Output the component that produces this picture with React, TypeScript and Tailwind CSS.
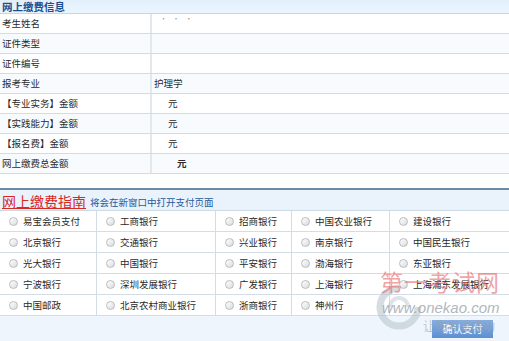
import React from 'react';

const FONT = { fontFamily: '"Noto Sans CJK SC", "Noto Sans", sans-serif' };

const info: { label: string; value: React.ReactNode }[] = [
  { label: '考生姓名', value: <span className="ml-[8px] -mt-[10px] text-[7px] tracking-[2px] text-[#999]">· · ·</span> },
  { label: '证件类型', value: null },
  { label: '证件编号', value: null },
  { label: '报考专业', value: <span className="ml-[2px]">护理学</span> },
  { label: '【专业实务】金额', value: <span className="ml-[16px]">元</span> },
  { label: '【实践能力】金额', value: <span className="ml-[16px]">元</span> },
  { label: '【报名费】金额', value: <span className="ml-[16px]">元</span> },
  { label: '网上缴费总金额', value: <span className="ml-[25px] font-bold">元</span> },
];

const banks = [
  ['易宝会员支付', '工商银行', '招商银行', '中国农业银行', '建设银行'],
  ['北京银行', '交通银行', '兴业银行', '南京银行', '中国民生银行'],
  ['光大银行', '中国银行', '平安银行', '渤海银行', '东亚银行'],
  ['宁波银行', '深圳发展银行', '广发银行', '上海银行', '上海浦东发展银行'],
  ['中国邮政', '北京农村商业银行', '浙商银行', '神州行', ''],
];

const Radio = () => (
  <span className="inline-block w-[9px] h-[9px] shrink-0 rounded-full border border-[#b9bcc0] bg-gradient-to-br from-white to-[#d9dcdf]" />
);

export default function App() {
  return (
    <div className="relative w-[509px] h-[341px] overflow-hidden bg-white text-[#2a2a2a]" style={FONT}>
      {/* 缴费信息 */}
      <div className="h-[14px] flex items-center pl-[2px] bg-gradient-to-b from-[#e2effb] to-[#ebf5fe] border-b border-[#c4d6e4]">
        <span className="text-[10.5px] leading-[13px] font-bold text-[#1d4f8e]">网上缴费信息</span>
      </div>
      {info.map((row, i) => (
        <div
          key={row.label}
          className={`flex h-[20px] border-b border-[#d3dce2] text-[9.5px] ${i % 2 === 0 ? 'bg-white' : 'bg-[#f8fbfd]'}`}
        >
          <div className="w-[152px] shrink-0 flex items-center pl-[2px] border-r-2 border-[#e2e8ec]">{row.label}</div>
          <div className="flex-1 flex items-center">{row.value}</div>
        </div>
      ))}
      <div className="h-[14px] bg-white" />

      {/* 缴费指南 */}
      <div className="border-t-2 border-[#6d8ca4] h-[23px] flex items-end pb-[2px] pl-[2px] gap-[4px] bg-[#eaf3fc] border-b border-b-[#cddbe7]">
        <span className="text-[14px] leading-none text-[#d8291f] underline underline-offset-[1px] decoration-[1px]">网上缴费指南</span>
        <span className="text-[9.5px] leading-none text-[#1f5a9a] mb-[1px]">将会在新窗口中打开支付页面</span>
      </div>
      <div className="grid grid-cols-[97px_119px_76px_98px_119px] bg-white">
        {banks.flat().map((name, i) => (
          <div
            key={i}
            className={`h-[21px] flex items-center gap-[5px] pl-[9px] border-b border-[#d2dde7] text-[9.5px] whitespace-nowrap ${i % 5 !== 4 ? 'border-r' : ''} border-r-[#d2dde7]`}
          >
            {name && <Radio />}
            {name && <span>{name}</span>}
          </div>
        ))}
      </div>
      <div className="h-[25px] bg-[#eef5fc] flex items-center justify-end pr-[16px] pt-[1px]">
        <button className="w-[61px] h-[18px] bg-gradient-to-b from-[#85aee3] to-[#5f8fd2] text-white text-[10px] leading-none">
          确认支付
        </button>
      </div>

      {/* 水印 */}
      <div className="absolute left-[372px] top-[268px] w-[135px] h-[70px] pointer-events-none">
        <svg className="absolute left-[4px] top-[16px]" width="46" height="46" viewBox="0 0 46 46">
          <path d="M23 4 A19 19 0 1 0 42 23" fill="none" stroke="#b4c1ca" strokeWidth="7" opacity="0.55" />
          <path d="M14 23 A9 9 0 0 1 32 23" fill="none" stroke="#b4c1ca" strokeWidth="4" opacity="0.45" />
        </svg>
        <div className="absolute left-[8px] top-[2px] text-[23px] leading-none tracking-[1px] text-[#e26a6a] opacity-60">第一考试网</div>
        <div className="absolute left-[10px] top-[32px] text-[15px] leading-none italic text-[#8e9aa4] opacity-70" style={{ fontFamily: '"Liberation Sans", Arial, sans-serif' }}>
          www.onekao.com
        </div>
        <div className="absolute left-[51px] top-[52px] text-[12px] leading-none text-[#9aa3aa] opacity-60">让你考试成功</div>
      </div>
    </div>
  );
}
